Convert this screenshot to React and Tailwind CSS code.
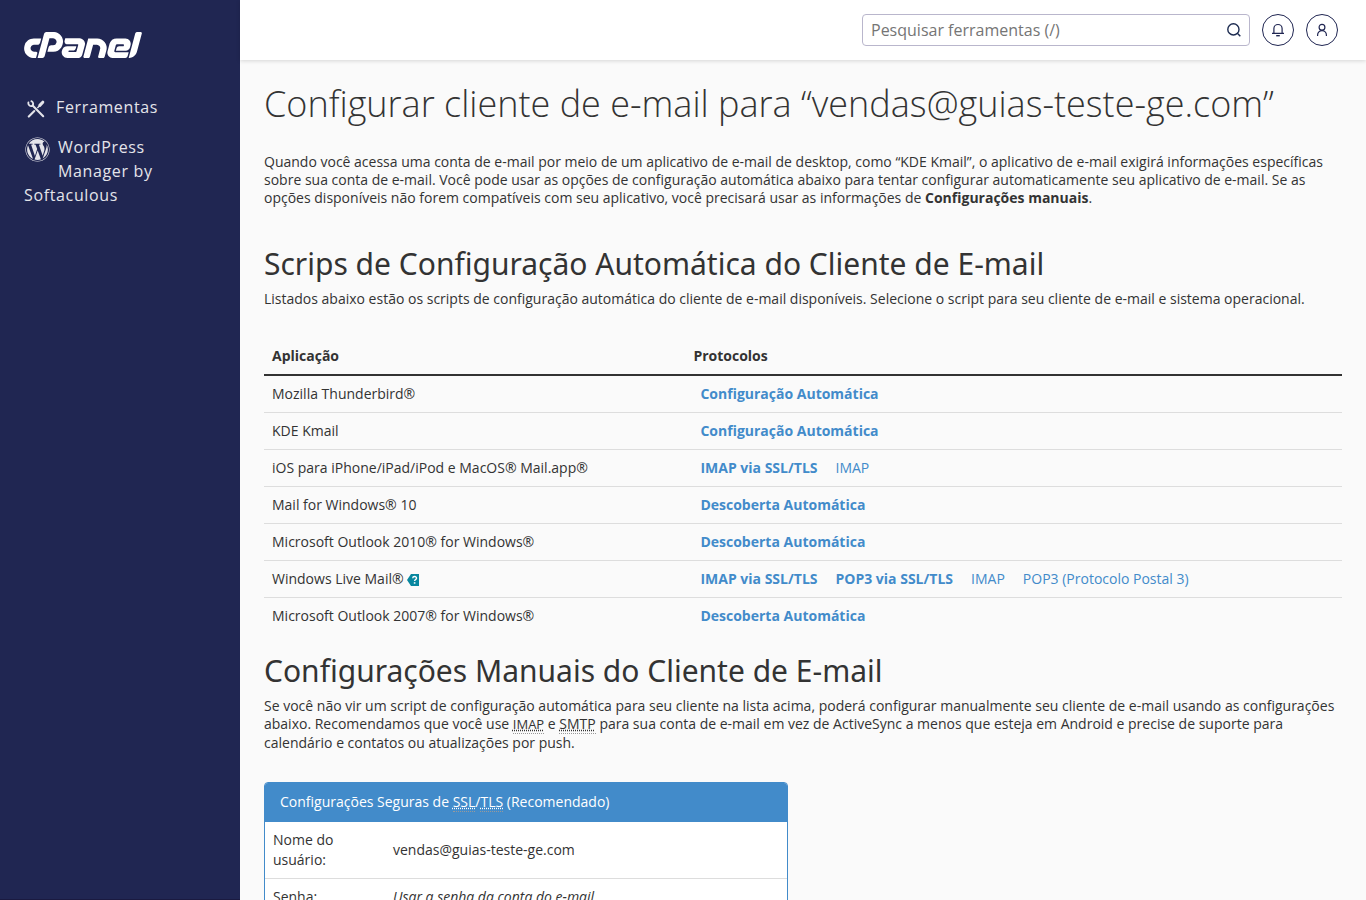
import React from 'react';
import { SiCpanel } from 'react-icons/si';
import { FaWordpress } from 'react-icons/fa';

const AUTO = [{ label: 'Configuração Automática', strong: true }];
const DISCOVER = [{ label: 'Descoberta Automática', strong: true }];

const APPS = [
  { name: 'Mozilla Thunderbird®', links: AUTO },
  { name: 'KDE Kmail', links: AUTO },
  {
    name: 'iOS para iPhone/iPad/iPod e MacOS® Mail.app®',
    links: [{ label: 'IMAP via SSL/TLS', strong: true }, { label: 'IMAP' }],
  },
  { name: 'Mail for Windows® 10', links: DISCOVER },
  { name: 'Microsoft Outlook 2010® for Windows®', links: DISCOVER },
  {
    name: 'Windows Live Mail®',
    help: true,
    links: [
      { label: 'IMAP via SSL/TLS', strong: true },
      { label: 'POP3 via SSL/TLS', strong: true },
      { label: 'IMAP' },
      { label: 'POP3 (Protocolo Postal 3)' },
    ],
  },
  { name: 'Microsoft Outlook 2007® for Windows®', links: DISCOVER },
];

function ToolsIcon() {
  return (
    <svg viewBox="0 0 18 18" className="block size-[18px]" fill="none" stroke="currentColor" aria-hidden="true">
      <path d="M5.6 5.6 16.2 16.2" strokeWidth="2.1" strokeLinecap="round" />
      <path d="M1.4 2.4A3 3 0 0 0 5.3 5.9 3 3 0 0 0 4.4 1.1" strokeWidth="1.8" strokeLinecap="round" />
      <path d="M1.8 16.6 7.3 11.1" strokeWidth="2.1" strokeLinecap="round" />
      <path d="M10.4 8 13.4 5" strokeWidth="1.4" />
      <path d="M12.8 5.4 15.8 2.2" strokeWidth="3" strokeLinecap="round" />
    </svg>
  );
}

function SearchIcon() {
  return (
    <svg viewBox="0 0 16 16" className="block size-4" fill="none" stroke="currentColor" strokeWidth="1.4" aria-hidden="true">
      <circle cx="7.4" cy="7.4" r="5.6" />
      <path d="m11.3 11.3 3 3" />
    </svg>
  );
}

function BellIcon() {
  return (
    <svg viewBox="0 0 14 14" className="block size-3.5" fill="none" stroke="currentColor" strokeWidth="1.2" aria-hidden="true">
      <path d="M1 10.4h12M2.9 10.4V5.6a4.1 4.1 0 0 1 8.2 0v4.8" />
      <path d="M5.2 12.7h3.6" strokeWidth="1.4" />
    </svg>
  );
}

function UserIcon() {
  return (
    <svg viewBox="0 0 14 14" className="block size-3.5" fill="none" stroke="currentColor" strokeWidth="1.2" aria-hidden="true">
      <circle cx="7" cy="4.2" r="2.9" />
      <path d="M2.6 13V12a4.4 4.4 0 0 1 8.8 0v1" />
    </svg>
  );
}

function HelpIcon() {
  return (
    <svg viewBox="0 0 12 12" className="block size-3" aria-hidden="true">
      <path d="M0 6 4 0h8v12H4z" fill="#08879f" />
      <path d="M5.7 4.2c.1-2.3 3.9-2.2 3.8 0 0 1.3-1.9 1.3-1.9 2.9" fill="none" stroke="#fff" strokeWidth="1.4" />
      <path d="M6.8 8.2h1.6v1.5H6.8z" fill="#fff" />
    </svg>
  );
}

function Abbr({ title, small, children }) {
  return (
    <abbr
      title={title}
      className={
        'inline-block cursor-help border-b border-dotted border-[#999] leading-[18px] underline decoration-dotted ' +
        (small ? 'text-[13px]' : '')
      }
    >
      {children}
    </abbr>
  );
}

function SectionTitle({ children }) {
  return <h2 className="font-['Noto_Sans','Open_Sans',sans-serif] text-[30px] leading-10 font-normal">{children}</h2>;
}

export default function App() {
  return (
    <div className="flex h-screen overflow-hidden bg-[#fafafa] font-['Open_Sans','Noto_Sans',sans-serif] text-sm text-[#333]">
      <aside className="w-60 shrink-0 border-b border-[#1a1a40] bg-[#202652] px-6 text-[#e4e4ea]">
        <a href="#home" aria-label="cPanel" className="block pt-8 text-white">
          <SiCpanel viewBox="0 9.35 24 5.3" className="block h-[26px] w-[118px]" />
        </a>
        <nav className="mt-9 text-base leading-6 tracking-[0.04em]">
          <a href="#tools" className="flex items-center pt-px">
            <span className="mr-[11px] ml-[3px] pt-[3px]">
              <ToolsIcon />
            </span>
            Ferramentas
          </a>
          <a href="#wordpress" className="mt-4 block">
            <FaWordpress className="float-left mt-0.5 mr-2 ml-px block size-[25px]" />
            WordPress Manager by Softaculous
          </a>
        </nav>
      </aside>

      <div className="flex min-w-0 flex-1 flex-col">
        <header className="z-10 flex h-15 shrink-0 items-center justify-end gap-3 bg-white pr-7 shadow-[0_1px_4px_rgba(0,0,0,0.15)]">
          <div className="flex h-8 w-[388px] items-center rounded-sm border border-[#b9b6cc] bg-white pr-[7px] pl-2">
            <input
              type="text"
              aria-label="Pesquisar ferramentas"
              placeholder="Pesquisar ferramentas (/)"
              className="min-w-0 flex-1 bg-transparent text-base leading-6 outline-none placeholder:text-[#757575]"
            />
            <button type="button" aria-label="Pesquisar" className="text-[#1c2b50]">
              <SearchIcon />
            </button>
          </div>
          <button type="button" aria-label="Notificações" className="flex size-8 items-center justify-center rounded-full border border-[#202652] text-[#202652]">
            <BellIcon />
          </button>
          <button type="button" aria-label="Conta" className="flex size-8 items-center justify-center rounded-full border border-[#202652] text-[#202652]">
            <UserIcon />
          </button>
        </header>

        <main className="min-h-0 flex-1 overflow-y-auto px-6 pt-5 [scrollbar-width:none]">
          <h1 className="text-4xl leading-12 font-light">Configurar cliente de e-mail para “vendas@guias-teste-ge.com”</h1>
          <p className="mt-[25px] mb-[37px] leading-[18px]">
            Quando você acessa uma conta de e-mail por meio de um aplicativo de e-mail de desktop, como “KDE Kmail”, o
            aplicativo de e-mail exigirá informações específicas sobre sua conta de e-mail. Você pode usar as opções de
            configuração automática abaixo para tentar configurar automaticamente seu aplicativo de e-mail. Se as opções
            disponíveis não forem compatíveis com seu aplicativo, você precisará usar as informações de{' '}
            <strong className="font-bold">Configurações manuais</strong>.
          </p>

          <SectionTitle>Scrips de Configuração Automática do Cliente de E-mail</SectionTitle>
          <p className="mt-1.5 leading-[18px]">
            Listados abaixo estão os scripts de configuração automática do cliente de e-mail disponíveis. Selecione o
            script para seu cliente de e-mail e sistema operacional.
          </p>

          <table className="mt-7 mb-[17px] w-full table-fixed border-collapse leading-5">
            <thead>
              <tr className="border-b-2 border-[#333] text-left">
                <th className="w-[39%] px-2 pt-2.5 pb-2 font-bold">Aplicação</th>
                <th className="px-[9px] pt-2.5 pb-2 font-bold">Protocolos</th>
              </tr>
            </thead>
            <tbody>
              {APPS.map((app) => (
                <tr key={app.name} className="border-b border-[#ddd] last:border-b-0">
                  <td className="p-2">
                    <span className="flex items-center gap-[3px]">
                      {app.name}
                      {app.help && (
                        <button type="button" aria-label="Ajuda" className="pt-0.5">
                          <HelpIcon />
                        </button>
                      )}
                    </span>
                  </td>
                  <td className="py-2 pl-4">
                    <span className="flex gap-[18px] text-[#428bca]">
                      {app.links.map((link) => (
                        <a key={link.label} href="#script" className={link.strong ? 'font-bold' : ''}>
                          {link.label}
                        </a>
                      ))}
                    </span>
                  </td>
                </tr>
              ))}
            </tbody>
          </table>

          <SectionTitle>Configurações Manuais do Cliente de E-mail</SectionTitle>
          <p className="mt-1.5 leading-[18px]">
            Se você não vir um script de configuração automática para seu cliente na lista acima, poderá configurar
            manualmente seu cliente de e-mail usando as configurações abaixo. Recomendamos que você use{' '}
            <Abbr title="Internet Message Access Protocol" small>IMAP</Abbr> e{' '}
            <Abbr title="Simple Mail Transfer Protocol">SMTP</Abbr> para sua conta de e-mail em vez de ActiveSync a
            menos que esteja em Android e precise de suporte para calendário e contatos ou atualizações por push.
          </p>

          <section className="mt-[30px] mb-6 max-w-[524px] overflow-hidden rounded-sm border border-[#428bca] bg-white">
            <h3 className="bg-[#428bca] px-[15px] pt-2 pb-2.5 leading-[21px] text-white">
              Configurações Seguras de <Abbr title="Secure Sockets Layer">SSL</Abbr>/
              <Abbr title="Transport Layer Security">TLS</Abbr> (Recomendado)
            </h3>
            <table className="w-full table-fixed border-collapse leading-5">
              <tbody>
                <tr className="border-b border-[#ddd]">
                  <th className="w-30 py-2 pr-6 pl-2 text-left font-normal">Nome do usuário:</th>
                  <td className="p-2">vendas@guias-teste-ge.com</td>
                </tr>
                <tr>
                  <th className="py-2 pr-6 pl-2 text-left font-normal">Senha:</th>
                  <td className="p-2 italic">Usar a senha da conta do e-mail</td>
                </tr>
              </tbody>
            </table>
          </section>
        </main>
      </div>
    </div>
  );
}
